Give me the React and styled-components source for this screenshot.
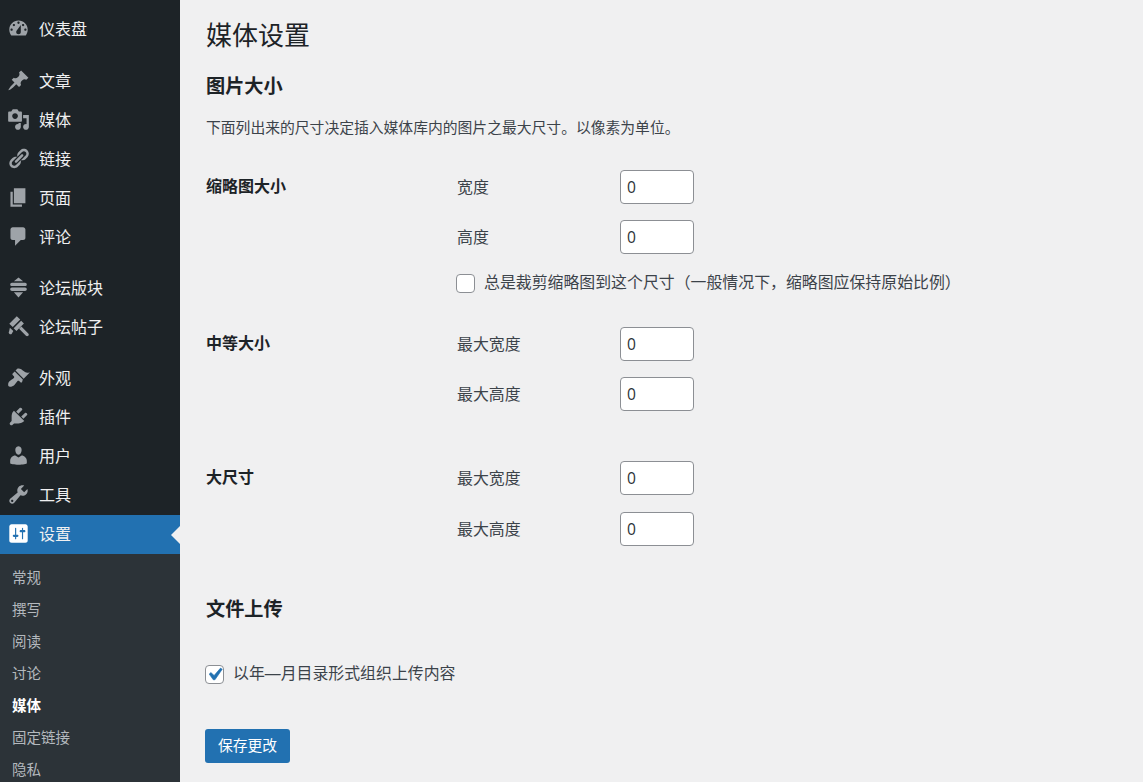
import React from "react";
import styled, { createGlobalStyle } from "styled-components";

const FONT = `"Liberation Sans", "Noto Sans CJK SC", sans-serif`;

const GlobalStyle = createGlobalStyle`
  html, body {
    margin: 0;
    height: 100%;
    overflow: hidden;
    background: #f0f0f1;
    font-family: ${FONT};
  }
`;

const Page = styled.div`
  display: flex;
  height: 782px;
  overflow: hidden;
`;

const Sidebar = styled.nav`
  width: 180px;
  flex-shrink: 0;
  height: 782px;
  overflow: hidden;
  background: #1d2327;
  padding-top: 10px;
  box-sizing: border-box;
`;

const MenuRow = styled.div`
  position: relative;
  display: flex;
  align-items: center;
  height: 39px;
  margin-top: ${(p) => p.$gap || 0}px;
  padding-left: 7px;
  gap: 9px;
  color: #f0f0f1;
  font-size: 16px;
  background: ${(p) => (p.$active ? "#2271b1" : "transparent")};

  svg {
    width: 23px;
    height: 23px;
    margin-bottom: 2px;
    flex-shrink: 0;
    fill: ${(p) => (p.$active ? "#ffffff" : "#9ea3a8")};
  }
`;

const MenuLabel = styled.span`
  padding-bottom: 3px;
`;

const ActiveArrow = styled.span`
  position: absolute;
  right: 0;
  top: 50%;
  margin-top: -9px;
  border: 9px solid transparent;
  border-right-color: #f0f0f1;
  border-left-width: 0;
`;

const SubMenu = styled.div`
  background: #2c3338;
  padding-top: 8px;
  height: 240px;
`;

const SubItem = styled.div`
  height: 32px;
  line-height: 32px;
  padding-left: 12px;
  font-size: 14.5px;
  color: ${(p) => (p.$current ? "#ffffff" : "#b4b9be")};
  font-weight: ${(p) => (p.$current ? 700 : 400)};
`;

const Main = styled.main`
  flex: 1;
  padding-left: 26px;
  color: #1d2327;
`;

const Title = styled.h1`
  margin: 0;
  padding-top: 18px;
  font-size: 26px;
  line-height: 36px;
  font-weight: 400;
`;

const SectionTitle = styled.h2`
  margin: ${(p) => p.$top}px 0 0;
  font-size: 19.2px;
  line-height: 28px;
  font-weight: 600;
`;

const Intro = styled.p`
  margin: 15px 0 0;
  font-size: 14.8px;
  line-height: 24px;
  color: #3c434a;
`;

const SizeRow = styled.section`
  display: grid;
  grid-template-columns: 251px 1fr;
  margin-top: ${(p) => p.$top}px;
`;

const SizeName = styled.div`
  font-size: 16px;
  font-weight: 600;
  line-height: 34px;
`;

const Fields = styled.div`
  display: flex;
  flex-direction: column;
  gap: ${(p) => p.$gap || 16}px;
`;

const Field = styled.label`
  display: flex;
  align-items: center;
  color: #3c434a;
  font-size: 15.9px;

  span {
    width: 163px;
    padding-bottom: 2px;
  }
`;

const NumberBox = styled.input`
  box-sizing: border-box;
  width: 74px;
  height: 34px;
  padding: 0 6px;
  border: 1px solid #8c8f94;
  border-radius: 4px;
  background: #fff;
  color: #2c3338;
  font-family: "Open Sans", sans-serif;
  font-size: 15.6px;
`;

const CheckLine = styled.label`
  display: flex;
  align-items: center;
  gap: 9px;
  color: #3c434a;
  font-size: 15.9px;
  line-height: 20px;
  margin-top: ${(p) => p.$top}px;
  margin-left: -1px;
`;

const CheckBox = styled.span`
  display: flex;
  align-items: center;
  justify-content: center;
  box-sizing: border-box;
  width: 19px;
  height: 19px;
  border: 1px solid #8c8f94;
  border-radius: 4px;
  background: #fff;

  svg {
    width: 25px;
    height: 25px;
    fill: #2271b1;
    stroke: #2271b1;
    stroke-width: 0.5;
    flex-shrink: 0;
  }
`;

const SaveButton = styled.button`
  display: block;
  width: 85px;
  height: 34px;
  margin: 45px 0 0 -1px;
  border: 0;
  border-radius: 3px;
  background: #2271b1;
  color: #fff;
  font-family: ${FONT};
  font-size: 14.8px;
  padding: 0 0 3px;
`;

const Icon = ({ d }) => (
  <svg viewBox="0 0 20 20" fillRule="evenodd" aria-hidden="true">
    <path d={d} />
  </svg>
);

const ICONS = {
  dashboard:
    "M3.76 16h12.48c1.1-1.37 1.76-3.11 1.76-5 0-4.42-3.58-8-8-8s-8 3.58-8 8c0 1.89.66 3.63 1.76 5zM10 4c.55 0 1 .45 1 1s-.45 1-1 1-1-.45-1-1 .45-1 1-1zM6 6c.55 0 1 .45 1 1s-.45 1-1 1-1-.45-1-1 .45-1 1-1zm8 0c.55 0 1 .45 1 1s-.45 1-1 1-1-.45-1-1 .45-1 1-1zm-5.37 5.55L12 7v6c0 1.1-.9 2-2 2s-2-.9-2-2c0-.57.24-1.08.63-1.45zM4 10c.55 0 1 .45 1 1s-.45 1-1 1-1-.45-1-1 .45-1 1-1zm12 0c.55 0 1 .45 1 1s-.45 1-1 1-1-.45-1-1 .45-1 1-1z",
  post:
    "M10.44 3.02l1.82-1.82 6.36 6.35-1.83 1.82c-1.05-.68-2.48-.57-3.41.36l-.75.75c-.92.93-1.04 2.35-.35 3.41l-1.83 1.82-2.41-2.41-2.8 2.79c-.42.42-3.38 2.71-3.8 2.29s1.86-3.39 2.28-3.81l2.79-2.79L4.1 9.36l1.83-1.82c1.05.69 2.48.57 3.4-.36l.75-.75c.93-.92 1.05-2.35.36-3.41z",
  media:
    "M13 11V4c0-.55-.45-1-1-1h-1.67L9 1H5L3.67 3H2c-.55 0-1 .45-1 1v7c0 .55.45 1 1 1h10c.55 0 1-.45 1-1zM7 4.5c1.38 0 2.5 1.12 2.5 2.5S8.38 9.5 7 9.5 4.5 8.38 4.5 7 5.62 4.5 7 4.5zM14 6h5v10.5c0 1.38-1.12 2.5-2.5 2.5S14 17.88 14 16.5s1.12-2.5 2.5-2.5c.17 0 .34.02.5.05V9h-3V6zm-4 8.05V13h2v3.5c0 1.38-1.12 2.5-2.5 2.5S7 17.88 7 16.5 8.12 14 9.5 14c.17 0 .34.02.5.05z",
  links:
    "M17.74 2.76c1.68 1.69 1.68 4.41 0 6.1l-1.53 1.52c-1.12 1.12-2.7 1.47-4.14 1.09l2.62-2.61.76-.77.76-.76c.84-.84.84-2.2 0-3.04-.84-.85-2.2-.85-3.04 0l-.77.76-3.38 3.38c-.37-1.44-.02-3.02 1.1-4.14l1.52-1.53c1.69-1.68 4.42-1.68 6.1 0zM8.59 13.43l5.34-5.34c.42-.42.42-1.1 0-1.52-.44-.43-1.13-.39-1.53 0l-5.33 5.34c-.42.42-.42 1.1 0 1.52.44.43 1.13.39 1.52 0zm-.76 2.29l4.14-4.15c.38 1.44.03 3.02-1.09 4.14l-1.52 1.53c-1.69 1.68-4.41 1.68-6.1 0-1.68-1.68-1.68-4.42 0-6.1l1.53-1.52c1.12-1.12 2.7-1.47 4.14-1.1l-4.14 4.15c-.85.84-.85 2.2 0 3.05.84.84 2.2.84 3.04 0z",
  page: "M6 15V2h10v13H6zm-1 1h8v2H3V5h2v11z",
  comments:
    "M5 2h9c1.1 0 2 .9 2 2v7c0 1.1-.9 2-2 2h-2l-5 5v-5H5c-1.1 0-2-.9-2-2V4c0-1.1.9-2 2-2z",
  forums:
    "M10 1.2l4 3.4H6zM4.300 5.800h11.400c.8 0 1.500.7 1.500 1.500s-.7 1.500-1.500 1.500H4.300c-.8 0-1.500-.7-1.500-1.500s.7-1.500 1.500-1.500zM4.300 10h11.400c.8 0 1.500.7 1.500 1.500s-.7 1.500-1.500 1.500H4.300c-.8 0-1.500-.7-1.500-1.500s.7-1.500 1.500-1.500zM6 14.200h8l-4 4.600z",
  topics:
    "M8.500 1l3 3-6.500 6.500-3-3zM12.300 5l2.400 2.400-6.500 6.500-2.400-2.400zM12.500 10l6 6c.6.6.6 1.500 0 2s-1.500.6-2 0l-6-6zM2.500 11l3 3-1.500 2.500c-.5.5-1.500.3-2-.2s-.7-1.500-.2-2z",
  appearance:
    "M14.480 11.060L7.410 3.990l1.500-1.500c.5-.56 2.300-.47 3.510.32 1.210.8 1.430 1.280 2.910 2.100 1.180.64 2.450 1.260 4.450.85zm-.71.71L6.700 4.700 4.930 6.470c-.39.39-.39 1.020 0 1.410l1.060 1.060c.39.39.39 1.030 0 1.420-.6.6-1.430 1.110-2.210 1.690-.35.26-.7.53-1.010.84C1.430 13.710 1 14.910 1 16.500c0 .8.700 1.500 1.500 1.500 1.600 0 2.790-.43 4.140-1.770.31-.31.58-.66.84-1.010.58-.78 1.090-1.610 1.690-2.210.39-.39 1.030-.39 1.420 0l1.060 1.060c.39.39 1.020.39 1.410 0z",
  plugins:
    "M13.110 4.360L9.870 7.600 8 5.730l3.240-3.240c.35-.34 1.050-.2 1.560.32.52.51.66 1.210.31 1.550zm-8 1.770l.91-1.120 9.010 9.010-1.190.84c-.71.71-2.630 1.160-3.820 1.160H6.140L4.900 17.260c-.59.59-1.540.59-2.120 0-.59-.58-.59-1.530 0-2.120l1.240-1.240v-3.880c0-1.130.4-3.190 1.090-3.890zm7.260 3.970l3.240-3.240c.34-.35 1.040-.21 1.550.31.52.51.66 1.210.31 1.550l-3.240 3.250z",
  users:
    "M10 9.250c-2.270 0-2.730-3.440-2.730-3.440C7 4.020 7.820 2 9.970 2c2.160 0 2.980 2.020 2.710 3.810 0 0-.41 3.440-2.680 3.440zm0 2.570L12.720 10c2.390 0 4.520 2.330 4.520 4.530v2.490s-3.650 1.130-7.240 1.130c-3.650 0-7.240-1.130-7.240-1.130v-2.490c0-2.250 1.940-4.480 4.470-4.480z",
  tools:
    "M16.680 9.770c-1.340 1.340-3.300 1.670-4.950.99l-5.410 6.520c-.99.99-2.590.99-3.580 0s-.99-2.590 0-3.570l6.520-5.420c-.68-1.650-.35-3.610.99-4.950 1.280-1.280 3.120-1.620 4.720-1.060l-2.890 2.890 2.820 2.820 2.860-2.870c.53 1.580.18 3.390-1.080 4.650zM3.810 16.210c.4.39 1.040.39 1.430 0 .4-.4.4-1.040 0-1.430-.39-.4-1.030-.4-1.430 0-.39.39-.39 1.030 0 1.430z",
  settings:
    "M18 16V4c0-1.100-.9-2-2-2H4c-1.100 0-2 .9-2 2v12c0 1.100.9 2 2 2h12c1.100 0 2-.9 2-2zM8 11h1c.55 0 1 .45 1 1s-.45 1-1 1H8v1.500c0 .28-.22.5-.5.5s-.5-.22-.5-.5V13H6c-.55 0-1-.45-1-1s.45-1 1-1h1V5.500c0-.28.22-.5.5-.5s.5.22.5.5V11zm5-2h-1c-.55 0-1-.45-1-1s.45-1 1-1h1V5.500c0-.28.22-.5.5-.5s.5.22.5.5V7h1c.55 0 1 .45 1 1s-.45 1-1 1h-1v5.500c0 .28-.22.5-.5.5s-.5-.22-.5-.5V9z",
};

const MENU = [
  { label: "仪表盘", icon: "dashboard" },
  { label: "文章", icon: "post", gap: 13 },
  { label: "媒体", icon: "media" },
  { label: "链接", icon: "links" },
  { label: "页面", icon: "page" },
  { label: "评论", icon: "comments" },
  { label: "论坛版块", icon: "forums", gap: 12 },
  { label: "论坛帖子", icon: "topics" },
  { label: "外观", icon: "appearance", gap: 12 },
  { label: "插件", icon: "plugins" },
  { label: "用户", icon: "users" },
  { label: "工具", icon: "tools" },
  { label: "设置", icon: "settings", active: true },
];

const SUBMENU = ["常规", "撰写", "阅读", "讨论", "媒体", "固定链接", "隐私"];

const SizeFields = ({ labels }) =>
  labels.map((label) => (
    <Field key={label}>
      <span>{label}</span>
      <NumberBox type="text" defaultValue="0" />
    </Field>
  ));

const App = () => (
  <Page>
    <GlobalStyle />
    <Sidebar>
      {MENU.map((item) => (
        <MenuRow key={item.label} $gap={item.gap} $active={item.active}>
          <Icon d={ICONS[item.icon]} />
          <MenuLabel>{item.label}</MenuLabel>
          {item.active && <ActiveArrow />}
        </MenuRow>
      ))}
      <SubMenu>
        {SUBMENU.map((label) => (
          <SubItem key={label} $current={label === "媒体"}>
            {label}
          </SubItem>
        ))}
      </SubMenu>
    </Sidebar>

    <Main>
      <Title>媒体设置</Title>
      <SectionTitle $top={19}>图片大小</SectionTitle>
      <Intro>下面列出来的尺寸决定插入媒体库内的图片之最大尺寸。以像素为单位。</Intro>

      <SizeRow $top={30}>
        <SizeName>缩略图大小</SizeName>
        <Fields>
          <SizeFields labels={["宽度", "高度"]} />
          <CheckLine $top={3}>
            <CheckBox />
            总是裁剪缩略图到这个尺寸（一般情况下，缩略图应保持原始比例）
          </CheckLine>
        </Fields>
      </SizeRow>

      <SizeRow $top={34}>
        <SizeName>中等大小</SizeName>
        <Fields>
          <SizeFields labels={["最大宽度", "最大高度"]} />
        </Fields>
      </SizeRow>

      <SizeRow $top={50}>
        <SizeName>大尺寸</SizeName>
        <Fields $gap={17}>
          <SizeFields labels={["最大宽度", "最大高度"]} />
        </Fields>
      </SizeRow>

      <SectionTitle $top={50}>文件上传</SectionTitle>
      <CheckLine $top={40}>
        <CheckBox>
          <svg viewBox="0 0 20 20" aria-hidden="true">
            <path d="M14.830 4.890l1.340.94-5.810 8.380H9.020L5.780 9.670l1.340-1.250 2.570 2.400z" />
          </svg>
        </CheckBox>
        以年—月目录形式组织上传内容
      </CheckLine>
      <SaveButton type="button">保存更改</SaveButton>
    </Main>
  </Page>
);

export default App;
